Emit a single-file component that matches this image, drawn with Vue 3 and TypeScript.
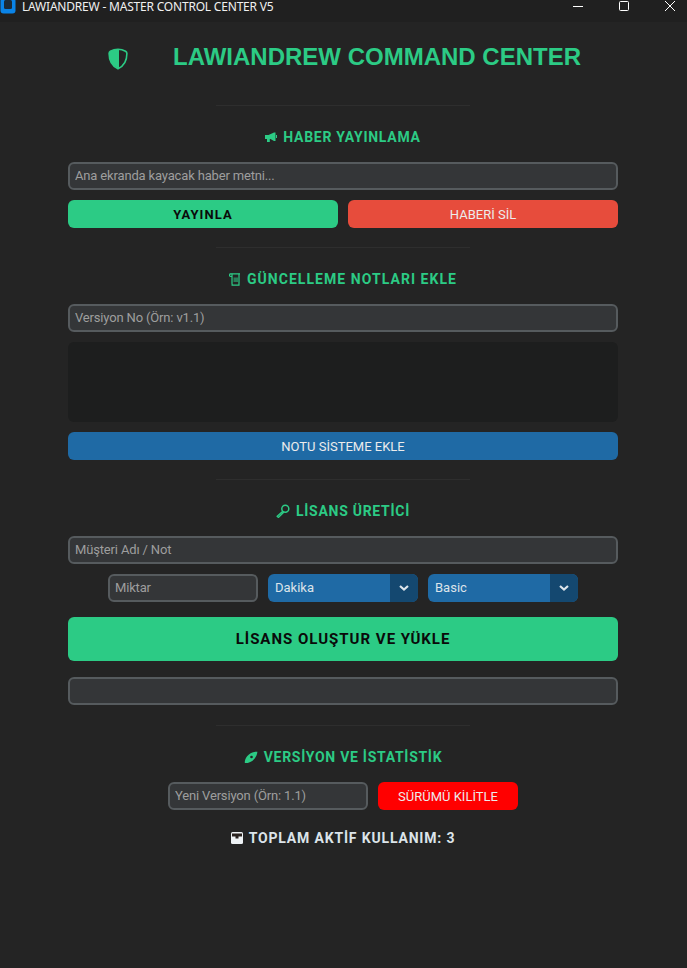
<script setup lang="ts">
</script>

<template>
  <div class="window">
    <header class="titlebar">
      <div class="title-left">
        <svg class="app-icon" width="16" height="14" viewBox="0 0 16 14"><rect x="0.5" y="-2" width="15" height="15.5" rx="3" fill="#0a84e8"/><rect x="4" y="0" width="8" height="9" rx="1.5" fill="#1c2a36"/></svg>
        <span class="title-text">LAWIANDREW - MASTER CONTROL CENTER V5</span>
      </div>
      <div class="win-controls">
        <svg width="12" height="12" viewBox="0 0 12 12"><path d="M1 6.5h10" stroke="#fff" stroke-width="1"/></svg>
        <svg width="12" height="12" viewBox="0 0 12 12"><rect x="1.5" y="1.5" width="9" height="9" rx="1" fill="none" stroke="#fff" stroke-width="1"/></svg>
        <svg width="12" height="12" viewBox="0 0 12 12"><path d="M1 1l10 10M11 1L1 11" stroke="#fff" stroke-width="1"/></svg>
      </div>
    </header>

    <main class="content">
      <div class="brand">
        <svg class="shield" width="20" height="22" viewBox="0 0 20 22">
          <path d="M10 1.200C12.500 1.200 15.500 2 17.600 3.200 18.600 3.800 18.900 4.500 18.900 5.500 18.900 12 16 18 10 20.800 4 18 1.100 12 1.100 5.500 1.100 4.500 1.400 3.800 2.400 3.200 4.500 2 7.500 1.200 10 1.200z" fill="none" stroke="#2ccb85" stroke-width="1.600"/>
          <path d="M11 1.200C7.500 1.200 4.500 2 2.400 3.200 1.400 3.800 1.100 4.500 1.100 5.500 1.100 12 4 18 11 20.800z" fill="#2ccb85"/>
        </svg>
        <h1 class="brand-title">LAWIANDREW COMMAND CENTER</h1>
      </div>

      <hr class="divider first" />
      <h2 class="section-title tight">
        <svg width="12" height="10" viewBox="0 0 12 10"><path d="M0 3h3.500L9 .5h1.500V9H9L5.500 7H4.800V10H2V7H0z" fill="#2ccb85"/><rect x="11" y="3" width="1" height="3" fill="#2ccb85"/></svg>
        HABER YAYINLAMA
      </h2>
      <input class="field" placeholder="Ana ekranda kayacak haber metni..." />
      <div class="btn-row">
        <button class="btn green bold">YAYINLA</button>
        <button class="btn red">HABERİ SİL</button>
      </div>

      <hr class="divider" />
      <h2 class="section-title wide">
        <svg width="12" height="13" viewBox="0 0 12 13"><path d="M.5 .8h10.500M2 .8c-1 0-1.500.6-1.500 1.500S1 3.500 2 3.500h1" fill="none" stroke="#2ccb85" stroke-width="1.200"/><path d="M10 .8v11.400H2.500M3 .8v10c0 .8.3 1.400.9 1.400" fill="none" stroke="#2ccb85" stroke-width="1.200"/><rect x="4.500" y="4.500" width="4.500" height="4.500" fill="#2ccb85" opacity=".55"/></svg>
        GÜNCELLEME NOTLARI EKLE
      </h2>
      <input class="field" placeholder="Versiyon No (Örn: v1.1)" />
      <div class="textbox"></div>
      <button class="btn blue full">NOTU SİSTEME EKLE</button>

      <hr class="divider" />
      <h2 class="section-title tight">
        <svg width="14" height="14" viewBox="0 0 14 14"><circle cx="9.300" cy="4.700" r="3.500" fill="none" stroke="#2ccb85" stroke-width="1.500"/><path d="M6.800 7.200L1.200 12.200l1.200 1.200L8 8" fill="none" stroke="#2ccb85" stroke-width="1.400"/></svg>
        LİSANS ÜRETİCİ
      </h2>
      <input class="field" placeholder="Müşteri Adı / Not" />
      <div class="license-row">
        <input class="field small" placeholder="Miktar" />
        <div class="combo"><span class="combo-label">Dakika</span><span class="combo-arrow"><svg width="10" height="6" viewBox="0 0 10 6"><path d="M1 1l4 3.500L9 1" fill="none" stroke="#dce4ea" stroke-width="2.200"/></svg></span></div>
        <div class="combo"><span class="combo-label">Basic</span><span class="combo-arrow"><svg width="10" height="6" viewBox="0 0 10 6"><path d="M1 1l4 3.500L9 1" fill="none" stroke="#dce4ea" stroke-width="2.200"/></svg></span></div>
      </div>
      <button class="btn green big">LİSANS OLUŞTUR VE YÜKLE</button>
      <input class="field result" />

      <hr class="divider last" />
      <h2 class="section-title tight">
        <svg width="14" height="13" viewBox="0 0 14 13"><path d="M.8 10.500C1 8 2.500 5.500 5 3.500 7.500 1.500 10.500.5 13.400.8 13.200 3.800 11.500 7 9 9.200 6.500 11.300 3.500 12.500.8 12z" fill="#2ccb85"/><circle cx="7.500" cy="6" r="1.300" fill="#242424"/></svg>
        VERSİYON VE İSTATİSTİK
      </h2>
      <div class="version-row">
        <input class="field version" placeholder="Yeni Versiyon (Örn: 1.1)" />
        <button class="btn pure-red">SÜRÜMÜ KİLİTLE</button>
      </div>
      <div class="stat">
        <svg width="12" height="12" viewBox="0 0 12 12"><rect width="12" height="12" rx="1.500" fill="#eef2f5"/><path d="M1 1.500h10V4.500H7.500V6.500h-3V4.500H1z" fill="#2a2320"/></svg>
        TOPLAM AKTİF KULLANIM: 3
      </div>
    </main>
  </div>
</template>

<style>
html, body { margin: 0; background: #242424; }
</style>

<style scoped>
.window {
  width: 687px;
  height: 968px;
  background: #242424;
  overflow: hidden;
  font-family: Roboto, "Liberation Sans", sans-serif;
}
.titlebar {
  height: 22px;
  background: #202020;
  display: flex;
  align-items: center;
  justify-content: space-between;
}
.title-left { display: flex; align-items: center; gap: 6px; align-self: flex-start; height: 14px; }
.app-icon { display: block; }
.title-text {
  font-family: "Noto Sans", "Open Sans", sans-serif;
  font-size: 12px;
  letter-spacing: -0.2px;
  color: #f0f0f0;
  line-height: 14px;
}
.win-controls {
  display: flex;
  gap: 34px;
  padding-right: 11px;
  margin-top: -10px;
}
.win-controls svg { display: block; }
.content {
  width: 550px;
  margin-left: 68px;
  display: flex;
  flex-direction: column;
}
.brand {
  display: flex;
  align-items: center;
  height: 70px;
  margin-bottom: 13px;
}
.shield { margin-left: 40px; margin-top: 4px; flex: none; }
.brand-title {
  margin: 0 0 0 45px;
  font-family: "Liberation Sans", Arial, sans-serif;
  font-size: 24px;
  font-weight: 700;
  color: #2ccb85;
  white-space: nowrap;
}
.divider {
  width: 254px;
  height: 1px;
  border: 0;
  margin: 0 auto;
  background: #2e2e2e;
  flex: none;
}
.section-title {
  margin: 22px 0 16px;
  height: 18px;
  display: flex;
  align-items: center;
  justify-content: center;
  gap: 6px;
  font-size: 14px;
  line-height: 18px;
  font-weight: 700;
  color: #2ccb85;
}
.tight { letter-spacing: 0.72px; }
.wide { letter-spacing: 1.05px; }
.section-title svg { flex: none; }
.field {
  box-sizing: border-box;
  height: 28px;
  width: 100%;
  flex: none;
  background: #343638;
  border: 2px solid #565b5e;
  border-radius: 6px;
  padding: 0 5px 1px;
  outline: none;
  color: #dce4ea;
  font-family: Roboto, sans-serif;
  font-size: 13px;
  letter-spacing: -0.16px;
}
.field::placeholder { color: #9e9e9e; opacity: 1; }
.btn-row { display: flex; gap: 10px; margin-top: 10px; margin-bottom: 19px; }
.btn {
  border: 0;
  padding: 0;
  height: 28px;
  border-radius: 6px;
  color: #ececec;
  font-family: Roboto, sans-serif;
  font-size: 13px;
  flex: none;
}
.btn-row .btn { width: 270px; }
.green { background: #2ccb85; color: #0a0a0a; }
.bold { font-weight: 700; letter-spacing: 1.1px; }
.red { background: #e74c3c; }
.blue { background: #1f6aa5; }
.full { width: 100%; margin-top: 10px; margin-bottom: 19px; }
.textbox {
  height: 80px;
  margin-top: 10px;
  background: #1d1e1e;
  border-radius: 6px;
  flex: none;
}
.license-row {
  display: flex;
  gap: 10px;
  justify-content: center;
  margin-top: 10px;
}
.small { width: 150px; }
.combo {
  width: 150px;
  height: 28px;
  border-radius: 6px;
  overflow: hidden;
  display: flex;
  background: #1f6aa5;
  color: #dce4ea;
  font-size: 13px;
}
.combo-label { flex: 1; padding-left: 7px; line-height: 28px; }
.combo-arrow {
  width: 28px;
  background: #144870;
  display: flex;
  align-items: center;
  justify-content: center;
}
.big {
  width: 100%;
  height: 44px;
  margin-top: 15px;
  font-size: 15px;
  font-weight: 700;
  letter-spacing: 1px;
}
.result { margin-top: 16px; margin-bottom: 20px; }
.version-row { display: flex; gap: 10px; justify-content: center; }
.version { width: 200px; }
.pure-red { width: 140px; background: #ff0000; }
.stat {
  margin-top: 19px;
  display: flex;
  align-items: center;
  justify-content: center;
  gap: 6px;
  height: 18px;
  font-size: 14px;
  font-weight: 700;
  letter-spacing: 0.83px;
  color: #dce4ea;
}
</style>
